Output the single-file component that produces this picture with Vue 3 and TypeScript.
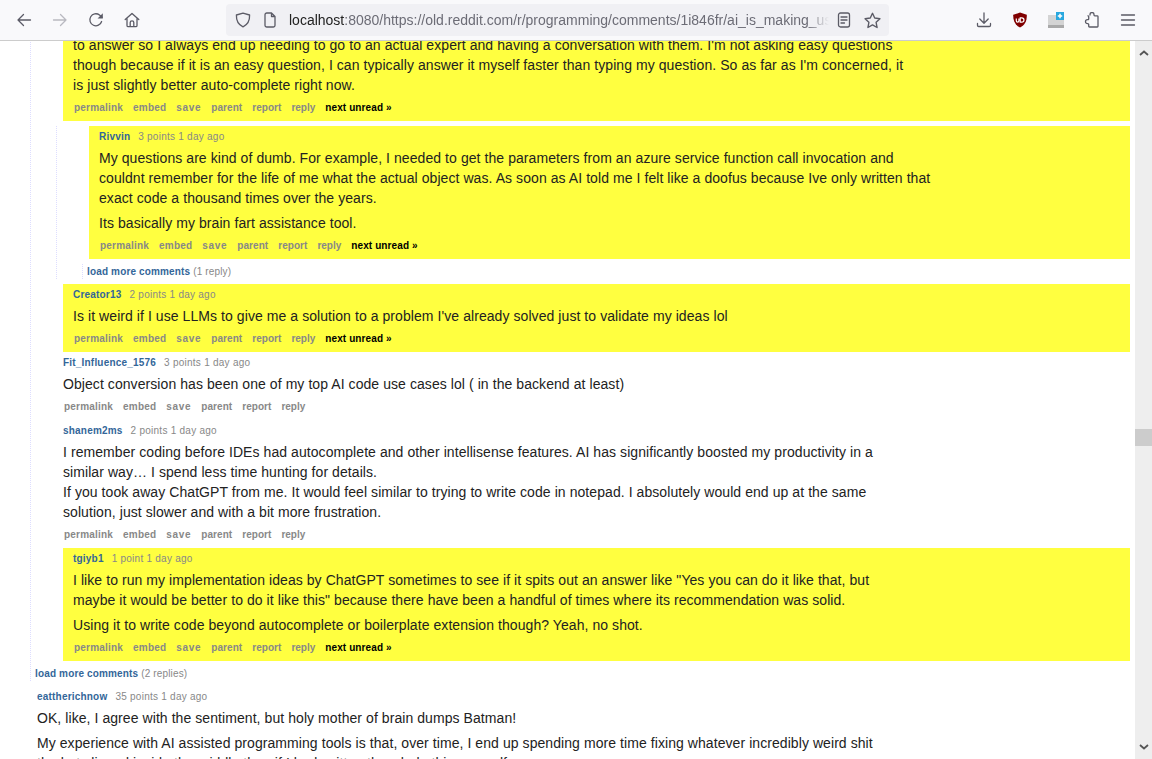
<script setup lang="ts">
const base = ['permalink', 'embed', 'save', 'parent', 'report', 'reply']
</script>

<template>
  <div class="app">
    <header class="toolbar">
      <div class="nav">
        <svg class="ico" viewBox="0 0 16 16"><path d="M14.5 8H2M7.5 2.5 2 8l5.5 5.5" /></svg>
        <svg class="ico dim" viewBox="0 0 16 16"><path d="M1.5 8H14M8.5 2.5 14 8l-5.5 5.5" /></svg>
        <svg class="ico" viewBox="0 0 16 16"><path d="M13.6 9.5A6 6 0 1 1 11.5 3L14 5.2" /><path class="fill" d="M14.8 1.2v5.2H9.6z" /></svg>
        <svg class="ico" viewBox="0 0 16 16"><path d="M1.2 7.6 8 1.4l6.8 6.2M3 6.4v7a1.2 1.2 0 0 0 1.2 1.2h7.6a1.2 1.2 0 0 0 1.2-1.2v-7M6.2 14.4v-3.8a1.8 1.8 0 0 1 3.6 0v3.8" /></svg>
      </div>
      <div class="urlbar">
        <svg class="ico" viewBox="0 0 16 16"><path d="M8 1.2 14.6 3c.2 5.500-1.800 9.600-6.600 11.800C3.200 12.600 1.200 8.500 1.400 3z" /></svg>
        <svg class="ico page" viewBox="0 0 16 16"><path d="M3 2.800A1.800 1.800 0 0 1 4.800 1H9.500L13 4.500v8.700a1.800 1.800 0 0 1-1.800 1.800H4.800A1.800 1.800 0 0 1 3 13.200zM9.500 1v3.500H13" /></svg>
        <div class="url"><span class="host">localhost</span>:8080/https://old.reddit.com/r/programming/comments/1i846fr/ai_is_making_us_worse_programmers</div>
        <svg class="ico reader" viewBox="0 0 16 16"><rect x="2.500" y="1" width="11" height="14" rx="2" /><path d="M5 5h6M5 8h6M5 11h3.500" /></svg>
        <svg class="ico star" viewBox="0 0 16 16"><path d="m8 1.200 2.100 4.500 4.900.6-3.600 3.400.9 4.900L8 12.200l-4.300 2.400.9-4.900L1 6.300l4.900-.6z" /></svg>
      </div>
      <div class="tools">
        <svg class="ico" viewBox="0 0 16 16"><path d="M8 1v10M3.800 7 8 11.200 12.200 7M1.500 11.500v1.800a1.200 1.200 0 0 0 1.200 1.200h10.600a1.200 1.200 0 0 0 1.200-1.200v-1.800" /></svg>
        <svg class="tool-badge" viewBox="0 0 16 16"><path class="ub" d="M8 .6 14.800 2.800c.2 6-1.800 10.400-6.800 12.800C3 13.200 1 8.800 1.200 2.800z" /><path class="ub-mark" d="M4.300 6.500v2.300a1.300 1.300 0 0 0 2.600 0V6.500M8.200 5.800v4.300h1.600a2.150 2.150 0 0 0 0-4.300z" /></svg>
        <svg class="tool-ext" viewBox="0 0 16 16"><rect x="0" y="3" width="16" height="13" fill="#d4d4d4" /><rect x="0" y="13" width="16" height="3" fill="#a9a9a9" /><rect x="8" y="0" width="8" height="8" fill="#29a8df" /><path d="M12 1.800v4.400M9.800 4h4.400" stroke="#fff" stroke-width="1.500" fill="none" /></svg>
        <svg class="ico" viewBox="0 0 16 16"><path d="M6 3V2.500a2 2 0 0 1 4 0V3a.8.8 0 0 0 .8.800h2.400a.8.8 0 0 1 .8.800v9.600a.8.800 0 0 1-.8.800H5.500a.8.8 0 0 1-.8-.8v-1.700a.8.800 0 0 0-.8-.8h-.4a2 2 0 0 1 0-4h.4a.8.8 0 0 0 .8-.8V4.600a.8.800 0 0 0-.8-.8" /></svg>
        <svg class="ico" viewBox="0 0 16 16"><path d="M1.500 3h13M1.500 8h13M1.500 13h13" /></svg>
      </div>
    </header>

    <div class="main">
      <div class="page-content">
        <div class="scroll-inner">
          <div class="child root-child">
            <div class="comment">
              <div class="entry new first-entry">
                <div class="md">
                  <p>to answer so I always end up needing to go to an actual expert and having a conversation with them. I'm not asking easy questions though because if it is an easy question, I can typically answer it myself faster than typing my question. So as far as I'm concerned, it is just slightly better auto-complete right now.</p>
                </div>
                <ul class="links"><li v-for="a in base" :key="a">{{ a }}</li><li class="next">next unread »</li></ul>
              </div>
              <div class="child nested">
                <div class="comment">
                  <div class="entry new">
                    <div class="tag"><b>Rivvin</b><span>3 points 1 day ago</span></div>
                    <div class="md">
                      <p>My questions are kind of dumb. For example, I needed to get the parameters from an azure service function call invocation and couldnt remember for the life of me what the actual object was. As soon as AI told me I felt like a doofus because Ive only written that exact code a thousand times over the years.</p>
                      <p>Its basically my brain fart assistance tool.</p>
                    </div>
                    <ul class="links"><li v-for="a in base" :key="a">{{ a }}</li><li class="next">next unread »</li></ul>
                  </div>
                  <div class="child nested">
                    <div class="more"><b>load more comments</b> (1 reply)</div>
                  </div>
                </div>
              </div>
            </div>

            <div class="comment">
              <div class="entry new">
                <div class="tag"><b>Creator13</b><span>2 points 1 day ago</span></div>
                <div class="md"><p>Is it weird if I use LLMs to give me a solution to a problem I've already solved just to validate my ideas lol</p></div>
                <ul class="links"><li v-for="a in base" :key="a">{{ a }}</li><li class="next">next unread »</li></ul>
              </div>
            </div>

            <div class="comment">
              <div class="entry">
                <div class="tag"><b>Fit_Influence_1576</b><span>3 points 1 day ago</span></div>
                <div class="md"><p>Object conversion has been one of my top AI code use cases lol ( in the backend at least)</p></div>
                <ul class="links"><li v-for="a in base" :key="a">{{ a }}</li></ul>
              </div>
            </div>

            <div class="comment">
              <div class="entry">
                <div class="tag"><b>shanem2ms</b><span>2 points 1 day ago</span></div>
                <div class="md"><p>I remember coding before IDEs had autocomplete and other intellisense features. AI has significantly boosted my productivity in a similar way… I spend less time hunting for details.<br />If you took away ChatGPT from me. It would feel similar to trying to write code in notepad. I absolutely would end up at the same solution, just slower and with a bit more frustration.</p></div>
                <ul class="links"><li v-for="a in base" :key="a">{{ a }}</li></ul>
              </div>
            </div>

            <div class="comment">
              <div class="entry new">
                <div class="tag"><b>tgiyb1</b><span>1 point 1 day ago</span></div>
                <div class="md">
                  <p>I like to run my implementation ideas by ChatGPT sometimes to see if it spits out an answer like "Yes you can do it like that, but maybe it would be better to do it like this" because there have been a handful of times where its recommendation was solid.</p>
                  <p>Using it to write code beyond autocomplete or boilerplate extension though? Yeah, no shot.</p>
                </div>
                <ul class="links"><li v-for="a in base" :key="a">{{ a }}</li><li class="next">next unread »</li></ul>
              </div>
            </div>

            <div class="more"><b>load more comments</b> (2 replies)</div>
          </div>

          <div class="comment top-comment">
            <div class="entry">
              <div class="tag"><b>eattherichnow</b><span>35 points 1 day ago</span></div>
              <div class="md">
                <p>OK, like, I agree with the sentiment, but holy mother of brain dumps Batman!</p>
                <p>My experience with AI assisted programming tools is that, over time, I end up spending more time fixing whatever incredibly weird shit the bot slipped inside the middle than if I had written the whole thing myself.</p>
              </div>
            </div>
          </div>
        </div>
      </div>
      <div class="scrollbar">
        <svg class="arrow" viewBox="0 0 10 6"><path d="M1 5 5 1.500 9 5" /></svg>
        <div class="track"><div class="thumb"></div></div>
        <svg class="arrow" viewBox="0 0 10 6"><path d="M1 1 5 4.500 9 1" /></svg>
      </div>
    </div>
  </div>
</template>

<style>
html, body { margin: 0; overflow: hidden; background: #fff; }
</style>

<style scoped>
.app { height: 759px; display: flex; flex-direction: column; font-family: "Liberation Sans", Arial, sans-serif; overflow: hidden; }
.toolbar { height: 40px; flex: none; display: flex; align-items: center; background: #f9f9fb; border-bottom: 1px solid #ccc; }
.ico { width: 16px; height: 16px; fill: none; stroke: #5b5b66; stroke-width: 1.300; flex: none; stroke-linecap: round; stroke-linejoin: round; }
.ico .fill { fill: #5b5b66; stroke: none; }
.ico.dim { stroke: #b9b9c0; }
.nav { display: flex; align-items: center; gap: 20px; padding-left: 16px; width: 210px; box-sizing: content-box; flex: none; }
.urlbar { width: 663px; height: 32px; flex: none; box-sizing: border-box; background: #f0f0f4; border-radius: 4px; display: flex; align-items: center; padding: 0 8px 0 9px; }
.page { margin-left: 11px; }
.url { flex: 1; min-width: 0; margin: 0 7px 0 11px; white-space: nowrap; overflow: hidden; font-size: 14px; color: #6c6c76; -webkit-mask-image: linear-gradient(to right, #000 96%, transparent); mask-image: linear-gradient(to right, #000 96%, transparent); }
.host { color: #222; }
.star { margin-left: 12px; width: 17px; height: 17px; }
.tools { display: flex; align-items: center; margin-left: 87px; gap: 20px; }
.tool-badge { width: 16px; height: 16px; flex: none; }
.ub { fill: #800000; }
.ub-mark { fill: none; stroke: #fff; stroke-width: 1.200; }
.tool-ext { width: 16px; height: 16px; flex: none; }
.main { flex: 1; min-height: 0; display: flex; }
.page-content { flex: 1; min-width: 0; overflow: hidden; padding-right: 5px; }
.scroll-inner { margin-top: -12px; }
.child { border-left: 1px dotted #ddf; padding-left: 4px; }
.root-child { margin-left: 30px; margin-bottom: 5px; }
.comment { margin-left: 28px; }
.nested { margin-left: -7px; margin-top: 5px; }
.comment:has(> .nested) { margin-bottom: 5px; }
.nested .comment:has(> .nested) { margin-bottom: 0; }
.entry { padding: 4px 0 8px; }
.entry.new { background: #ffff40; padding-left: 10px; }
.entry.first-entry { padding-top: 0; }
.tag { height: 12px; line-height: 14px; font-size: 10px; color: #888; display: flex; gap: 8px; white-space: nowrap; letter-spacing: 0.25px; }
.tag b { color: #369; font-weight: bold; letter-spacing: 0.2px; }
.md { margin-top: 6px; max-width: 840px; font-size: 14px; line-height: 20px; color: #222; letter-spacing: 0.07px; }
.md p { margin: 0 0 5px; }
.md p:last-child { margin-bottom: 0; }
.links { list-style: none; margin: 6px 0 0; padding: 0 0 0 1px; display: flex; gap: 10px; height: 12px; line-height: 14px; font-size: 10px; font-weight: bold; color: #888; letter-spacing: 0.2px; }
.links li:nth-child(3) { letter-spacing: 0.7px; }
.links li:nth-child(4) { letter-spacing: 0.05px; }
.links li:nth-child(5) { letter-spacing: 0.05px; }
.links li:nth-child(6) { letter-spacing: 0; }
.links .next { color: #000; letter-spacing: 0.1px; }
.more { height: 15px; line-height: 15px; font-size: 10px; color: #888; letter-spacing: 0.15px; white-space: nowrap; }
.more b { color: #369; }
.comment + .more { margin-top: 5px; }
.top-comment { margin-left: 37px; }
.scrollbar { width: 17px; flex: none; background: #eee; display: flex; flex-direction: column; align-items: center; }
.arrow { width: 10px; height: 6px; margin: 9px 0; flex: none; fill: none; stroke: #555; stroke-width: 1.800; }
.track { flex: 1; width: 100%; position: relative; }
.thumb { position: absolute; left: 0; right: 0; top: 364px; height: 17px; background: #ccc; }
</style>
